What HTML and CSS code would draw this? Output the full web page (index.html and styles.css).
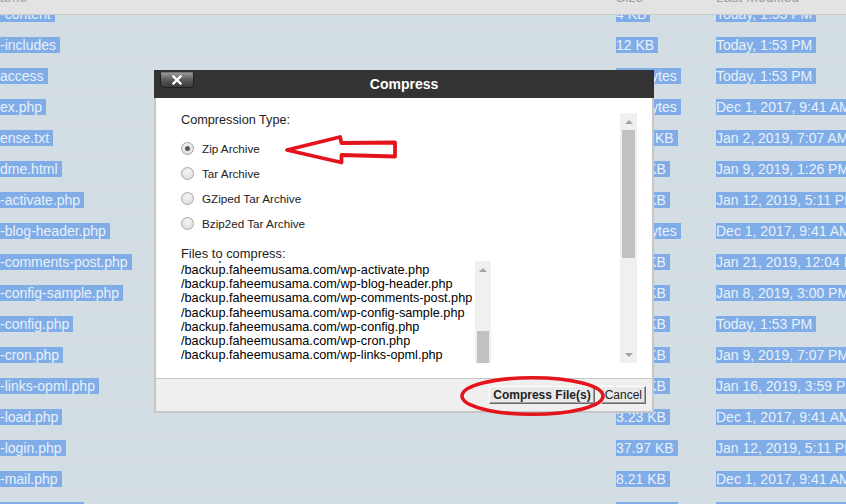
FILE: index.html
```html
<!DOCTYPE html>
<html lang="en">

<head>
  <meta charset="utf-8">
  <link rel="stylesheet" href="styles.css">
</head>

<body>
  <div class="file-head">
    <span class="col-name">ame</span>
    <span class="col-size">Size</span>
    <span class="col-date">Last Modified</span>
  </div>

  <div class="file-list">
    <div class="file-row"><span class="col-name"><span class="sel">-content</span></span><span class="col-size"><span class="sel">4 KB</span></span><span class="col-date"><span class="sel">Today, 1:53 PM</span></span></div>
    <div class="file-row"><span class="col-name"><span class="sel">-includes</span></span><span class="col-size"><span class="sel">12 KB</span></span><span class="col-date"><span class="sel">Today, 1:53 PM</span></span></div>
    <div class="file-row"><span class="col-name"><span class="sel">access</span></span><span class="col-size"><span class="sel">553 bytes</span></span><span class="col-date"><span class="sel">Today, 1:53 PM</span></span></div>
    <div class="file-row"><span class="col-name"><span class="sel">ex.php</span></span><span class="col-size"><span class="sel">405 bytes</span></span><span class="col-date"><span class="sel">Dec 1, 2017, 9:41 AM</span></span></div>
    <div class="file-row"><span class="col-name"><span class="sel">ense.txt</span></span><span class="col-size"><span class="sel">19.47 KB</span></span><span class="col-date"><span class="sel">Jan 2, 2019, 7:07 AM</span></span></div>
    <div class="file-row"><span class="col-name"><span class="sel">dme.html</span></span><span class="col-size"><span class="sel">7.25 KB</span></span><span class="col-date"><span class="sel">Jan 9, 2019, 1:26 PM</span></span></div>
    <div class="file-row"><span class="col-name"><span class="sel">-activate.php</span></span><span class="col-size"><span class="sel">6.69 KB</span></span><span class="col-date"><span class="sel">Jan 12, 2019, 5:11 PM</span></span></div>
    <div class="file-row"><span class="col-name"><span class="sel">-blog-header.php</span></span><span class="col-size"><span class="sel">369 bytes</span></span><span class="col-date"><span class="sel">Dec 1, 2017, 9:41 AM</span></span></div>
    <div class="file-row"><span class="col-name"><span class="sel">-comments-post.php</span></span><span class="col-size"><span class="sel">2.23 KB</span></span><span class="col-date"><span class="sel">Jan 21, 2019, 12:04 PM</span></span></div>
    <div class="file-row"><span class="col-name"><span class="sel">-config-sample.php</span></span><span class="col-size"><span class="sel">2.79 KB</span></span><span class="col-date"><span class="sel">Jan 8, 2019, 3:00 PM</span></span></div>
    <div class="file-row"><span class="col-name"><span class="sel">-config.php</span></span><span class="col-size"><span class="sel">3.17 KB</span></span><span class="col-date"><span class="sel">Today, 1:53 PM</span></span></div>
    <div class="file-row"><span class="col-name"><span class="sel">-cron.php</span></span><span class="col-size"><span class="sel">3.59 KB</span></span><span class="col-date"><span class="sel">Jan 9, 2019, 7:07 PM</span></span></div>
    <div class="file-row"><span class="col-name"><span class="sel">-links-opml.php</span></span><span class="col-size"><span class="sel">2.36 KB</span></span><span class="col-date"><span class="sel">Jan 16, 2019, 3:59 PM</span></span></div>
    <div class="file-row"><span class="col-name"><span class="sel">-load.php</span></span><span class="col-size"><span class="sel">3.23 KB</span></span><span class="col-date"><span class="sel">Dec 1, 2017, 9:41 AM</span></span></div>
    <div class="file-row"><span class="col-name"><span class="sel">-login.php</span></span><span class="col-size"><span class="sel">37.97 KB</span></span><span class="col-date"><span class="sel">Jan 12, 2019, 5:11 PM</span></span></div>
    <div class="file-row"><span class="col-name"><span class="sel">-mail.php</span></span><span class="col-size"><span class="sel">8.21 KB</span></span><span class="col-date"><span class="sel">Dec 1, 2017, 9:41 AM</span></span></div>
    <div class="file-row"><span class="col-name"><span class="sel">-settings.php</span></span><span class="col-size"><span class="sel">16.63 KB</span></span><span class="col-date"><span class="sel">Jan 9, 2019, 1:26 PM</span></span></div>
  </div>

  <div class="dialog">
    <div class="dialog-title">
      <span class="dialog-close">
        <svg width="10" height="10" viewBox="0 0 10 10">
          <path d="M1.5 1.5 L8.5 8.5 M8.5 1.5 L1.5 8.5" stroke="#fff" stroke-width="2.4" stroke-linecap="square"/>
        </svg>
      </span>
      Compress
    </div>

    <div class="dialog-main">
      <div class="dialog-body">
        <div class="scroll-content">
          <div class="field-label">Compression Type:</div>
          <div class="radio-list">
            <label class="radio"><span class="radio-mark checked"></span>Zip Archive</label>
            <label class="radio"><span class="radio-mark"></span>Tar Archive</label>
            <label class="radio"><span class="radio-mark"></span>GZiped Tar Archive</label>
            <label class="radio"><span class="radio-mark"></span>Bzip2ed Tar Archive</label>
          </div>

          <div class="field-label files-label">Files to compress:</div>
          <div class="file-box">
            <div class="file-lines">
              <div class="file-lines-inner">
                <div>/backup.faheemusama.com/readme.html</div>
                <div>/backup.faheemusama.com/wp-activate.php</div>
                <div>/backup.faheemusama.com/wp-blog-header.php</div>
                <div>/backup.faheemusama.com/wp-comments-post.php</div>
                <div>/backup.faheemusama.com/wp-config-sample.php</div>
                <div>/backup.faheemusama.com/wp-config.php</div>
                <div>/backup.faheemusama.com/wp-cron.php</div>
                <div>/backup.faheemusama.com/wp-links-opml.php</div>
                <div>/backup.faheemusama.com/wp-load.php</div>
                <div>/backup.faheemusama.com/wp-login.php</div>
              </div>
            </div>
            <div class="scrollbar">
              <span class="arrow-up"></span>
              <span class="track-gap small-gap"></span>
              <span class="thumb small-thumb"></span>
              <span class="track-gap"></span>
              <span class="arrow-down"></span>
            </div>
          </div>
        </div>

        <div class="scrollbar">
          <span class="arrow-up"></span>
          <span class="thumb main-thumb"></span>
          <span class="track-gap"></span>
          <span class="arrow-down"></span>
        </div>
      </div>

      <div class="dialog-foot">
        <button class="btn btn-main">Compress File(s)</button>
        <button class="btn">Cancel</button>
      </div>
    </div>
  </div>

  <svg class="marks" width="846" height="504" viewBox="0 0 846 504">
    <path d="M287 150 L340 137 L341.5 143 L395 142.5 L395 156.5 L341.5 155 L341.5 162.5 Z"
      fill="none" stroke="#e3141b" stroke-width="3.8" stroke-linejoin="round"/>
    <ellipse cx="532.5" cy="396" rx="70.5" ry="18.3" fill="none" stroke="#e3141b" stroke-width="3.6"/>
  </svg>
</body>

</html>
```

FILE: styles.css
```css
* {
  box-sizing: border-box;
}

body {
  margin: 0;
  width: 846px;
  height: 504px;
  overflow: hidden;
  position: relative;
  background-color: #d3dde4;
  font-family: 'Liberation Sans', Arial, sans-serif;
  font-size: 14px;
}

/* file manager table behind the modal */

.file-head {
  position: absolute;
  top: 0;
  left: 0;
  width: 100%;
  height: 15px;
  display: flex;
  overflow: hidden;
  background-color: #e3e3e3;
  border-bottom: 1px solid #cbcbcb;
  color: #a0a0a0;
  z-index: 1;
}

.file-head span {
  margin-top: -11px;
  line-height: 16px;
}

.file-list {
  margin-top: -1px;
}

.file-row {
  display: flex;
  align-items: center;
  height: 31px;
  border-bottom: 1px solid #dcdcdc;
}

.col-name {
  width: 616px;
  flex-shrink: 0;
}

.col-size {
  width: 100px;
  flex-shrink: 0;
}

.col-date {
  flex: 1;
  min-width: 0;
  white-space: nowrap;
  overflow: hidden;
}

.sel {
  background-color: #80ade8;
  color: #e9f1f8;
  padding-right: 4px;
}

/* compress dialog */

.dialog {
  position: absolute;
  left: 154px;
  top: 70px;
  width: 500px;
  z-index: 2;
}

.dialog-title {
  position: relative;
  height: 28px;
  background-color: #333;
  color: white;
  font-size: 14px;
  font-weight: bold;
  line-height: 28px;
  text-align: center;
}

.dialog-close {
  position: absolute;
  left: 6px;
  top: 2px;
  width: 34px;
  height: 16px;
  display: flex;
  align-items: center;
  justify-content: center;
  background: linear-gradient(#9a9a9a, #6a6a6a 35%, #4a4a4a 70%, #3c3c3c);
  border: 1px solid #1f1f1f;
  border-top-color: #777;
  border-radius: 2px 2px 5px 5px;
}

.dialog-main {
  background-color: white;
  border: 2px solid #c6c6c6;
  border-top: 0;
}

.dialog-body {
  display: flex;
  padding: 15px 15px 15px 25px;
}

.scroll-content {
  flex: 1;
  height: 250px;
  overflow: hidden;
  color: #222;
}

.field-label {
  font-size: 12.7px;
  line-height: 15px;
}

.radio-list {
  margin-top: 8px;
}

.radio {
  display: flex;
  align-items: center;
  height: 25px;
  font-size: 11.7px;
}

.radio-mark {
  width: 13px;
  height: 13px;
  margin-right: 8px;
  border: 1px solid #a8a8a8;
  border-radius: 50%;
  background: radial-gradient(circle at 50% 35%, #f6f6f6, #d8d8d8);
  display: flex;
  align-items: center;
  justify-content: center;
}

.radio-mark.checked::after {
  content: '';
  width: 5px;
  height: 5px;
  border-radius: 50%;
  background-color: #5a5a5a;
}

.files-label {
  margin-top: 10px;
  font-size: 12.9px;
}

.file-box {
  display: flex;
  width: 310px;
  height: 150px;
}

.file-lines {
  flex: 1;
  overflow: hidden;
  color: black;
  font-size: 12.7px;
  line-height: 14.2px;
  white-space: nowrap;
}

.file-lines-inner {
  margin-top: -12.2px;
}

.scrollbar {
  width: 17px;
  flex-shrink: 0;
  display: flex;
  flex-direction: column;
  align-items: center;
  background-color: #f0f0f0;
}

.file-box .scrollbar {
  width: 16px;
}

.arrow-up,
.arrow-down {
  height: 17px;
  flex-shrink: 0;
  display: flex;
  align-items: center;
  justify-content: center;
}

.arrow-up::after {
  content: '';
  border-left: 4px solid transparent;
  border-right: 4px solid transparent;
  border-bottom: 4px solid #a3a3a3;
}

.arrow-down::after {
  content: '';
  border-left: 4px solid transparent;
  border-right: 4px solid transparent;
  border-top: 4px solid #a3a3a3;
}

.thumb {
  width: 13px;
  flex-shrink: 0;
  background-color: #c1c1c1;
}

.file-box .thumb {
  width: 12px;
}

.main-thumb {
  height: 128px;
}

.small-thumb {
  height: 60px;
}

.track-gap {
  flex: 1;
}

.small-gap {
  flex: 0 0 53px;
}

.dialog-foot {
  height: 33px;
  display: flex;
  align-items: center;
  justify-content: flex-end;
  gap: 6px;
  padding-right: 6px;
  background-color: #efefef;
  border-top: 1px solid #c8c8c8;
}

.btn {
  height: 18px;
  padding: 0 3px;
  font-family: 'Liberation Sans', Arial, sans-serif;
  font-size: 12px;
  line-height: 15px;
  color: #222;
  background-color: #e9e9e9;
  border: 1px solid;
  border-color: #fff #6b6b6b #6b6b6b #fff;
  box-shadow: inset -1px -1px #a0a0a0;
}

.btn-main {
  font-weight: bold;
}

/* red annotations drawn over the screenshot */

.marks {
  position: absolute;
  left: 0;
  top: 0;
  z-index: 3;
  pointer-events: none;
}
```
